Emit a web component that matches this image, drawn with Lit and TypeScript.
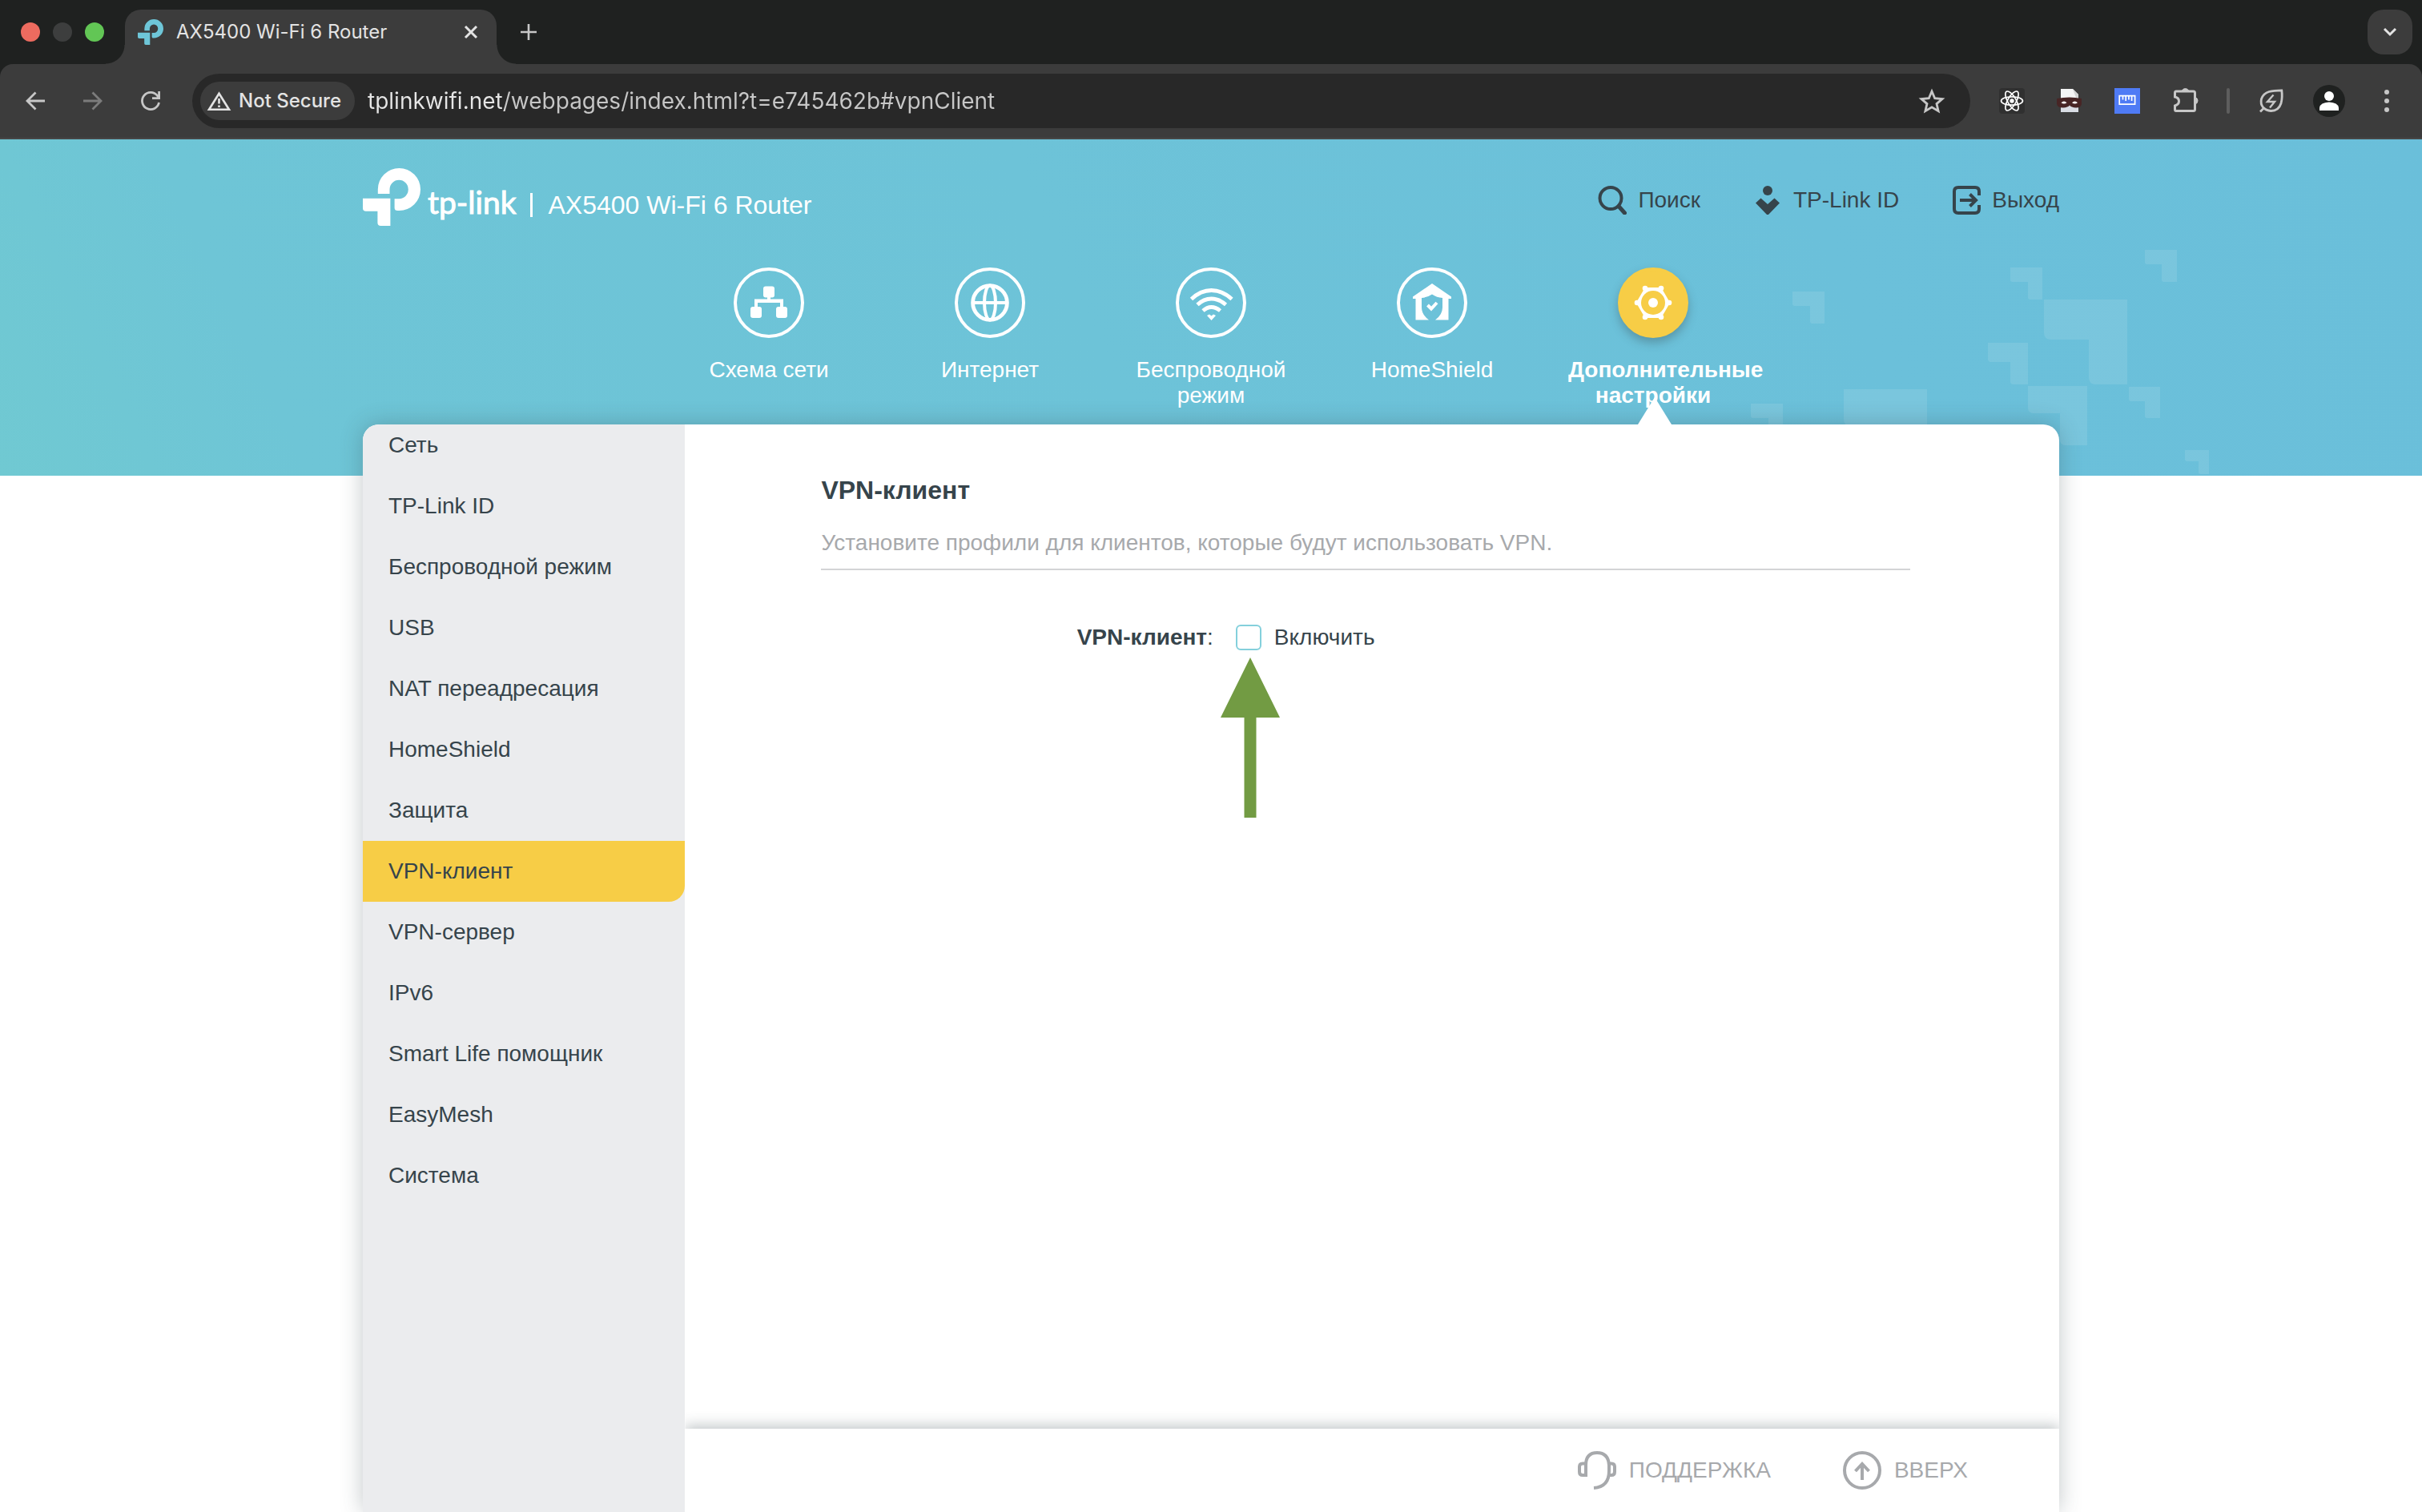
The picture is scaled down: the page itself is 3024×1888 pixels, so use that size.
import { LitElement, html, css, svg } from "lit";
import { customElement, state } from "lit/decorators.js";
import { classMap } from "lit/directives/class-map.js";

const tpMark = svg`
  <path d="M18.8 32V26.5A26.6 26.5 0 0 1 72 26.5A26.6 26.5 0 0 1 45.4 53H43.5Q39.6 53 39.6 49.5V38.3H45.4A11.6 11.7 0 0 0 56.8 26.5A11.6 11.7 0 0 0 33.5 26.5V32Z" />
  <path d="M0 37.8H34.4V72H22.5Q18.4 72 18.4 68V53.8H4Q0 53.8 0 50Z" />
`;

@customElement("browser-bar")
export class BrowserBar extends LitElement {
  static styles = css`
    :host {
      display: block;
      font-family: Inter, "Liberation Sans", sans-serif;
      color: #e3e3e3;
    }
    button {
      display: flex;
      align-items: center;
      justify-content: center;
      border: 0;
      padding: 0;
      background: none;
      color: #c7c7c7;
      font: inherit;
      flex: none;
    }
    svg {
      display: block;
      overflow: visible;
    }
    .stroke {
      fill: none;
      stroke: currentColor;
    }
    .strip {
      display: flex;
      align-items: center;
      height: 80px;
      padding: 0 12px 0 26px;
      background: #1f2120;
    }
    .lights {
      display: flex;
      gap: 16px;
      margin-right: 26px;
    }
    .light {
      width: 24px;
      height: 24px;
      border-radius: 50%;
      background: #3d3e3e;
    }
    .light.close {
      background: #ed6b5f;
    }
    .light.zoom {
      background: #62c655;
    }
    .tab {
      position: relative;
      display: flex;
      align-items: center;
      align-self: flex-end;
      width: 464px;
      height: 68px;
      padding: 0 16px 12px;
      box-sizing: border-box;
      border-radius: 20px 20px 0 0;
      background: #3c3c3c;
    }
    .tab::before,
    .tab::after {
      content: "";
      position: absolute;
      bottom: 0;
      width: 24px;
      height: 24px;
    }
    .tab::before {
      right: 100%;
      background: radial-gradient(circle at 0 0, transparent 23px, #3c3c3c 24px);
    }
    .tab::after {
      left: 100%;
      background: radial-gradient(circle at 100% 0, transparent 23px, #3c3c3c 24px);
    }
    .favicon {
      fill: #6ec6d8;
    }
    .title {
      flex: 1;
      margin-left: 16px;
      font-size: 24px;
      line-height: 32px;
      white-space: nowrap;
    }
    .tab button,
    .new-tab {
      width: 32px;
      height: 32px;
    }
    .tab button {
      color: #e3e3e3;
    }
    .new-tab {
      margin-left: 24px;
    }
    .tab-list {
      width: 56px;
      height: 56px;
      margin-left: auto;
      border-radius: 20px;
      background: #3c3c3c;
      color: #e3e3e3;
    }
    .corners {
      background: #1f2120;
    }
    .toolbar {
      display: flex;
      align-items: center;
      height: 92px;
      padding: 0 28px 0 32px;
      gap: 36px;
      background: #3c3c3c;
      border-bottom: 2px solid #474747;
      border-radius: 16px 16px 0 0;
    }
    .history {
      display: flex;
      gap: 48px;
      margin-right: 4px;
    }
    .history .off {
      color: #7c7c7c;
    }
    .address {
      flex: 1;
      display: flex;
      align-items: center;
      height: 68px;
      padding: 0 32px 0 10px;
      box-sizing: border-box;
      border-radius: 34px;
      background: #282828;
    }
    .chip {
      height: 48px;
      gap: 10px;
      padding: 0 17px 0 9px;
      border-radius: 24px;
      background: #3c3c3c;
      color: #e3e3e3;
      font-size: 24px;
      font-weight: 500;
      line-height: 32px;
      white-space: nowrap;
    }
    .url {
      flex: 1;
      min-width: 0;
      margin: 0 16px;
      padding: 0;
      border: 0;
      outline: 0;
      font: inherit;
      font-size: 28px;
      line-height: 36px;
      color: transparent;
      background: linear-gradient(90deg, #e6e6e6 171px, #c7c7c7 171px);
      -webkit-background-clip: text;
      background-clip: text;
    }
    .extensions {
      display: flex;
      gap: 40px;
    }
    .rule {
      width: 4px;
      height: 32px;
      border-radius: 2px;
      background: #5e5e5e;
    }
    .avatar {
      width: 40px;
      height: 40px;
      border-radius: 50%;
      background: #1f2120;
      color: #fff;
    }
  `;

  render() {
    return html`
      <div class="strip">
        <div class="lights">
          <span class="light close"></span><span class="light"></span><span class="light zoom"></span>
        </div>
        <div class="tab">
          <svg class="favicon" width="32" height="32" viewBox="0 0 72 72">${tpMark}</svg>
          <span class="title">AX5400 Wi-Fi 6 Router</span>
          <button aria-label="Close tab">
            <svg class="stroke" width="16" height="16" viewBox="0 0 16 16" stroke-width="3"><path d="M1 1 15 15M15 1 1 15" /></svg>
          </button>
        </div>
        <button class="new-tab" aria-label="New tab">
          <svg class="stroke" width="20" height="20" viewBox="0 0 20 20" stroke-width="2.6"><path d="M10 0V20M0 10H20" /></svg>
        </button>
        <button class="tab-list" aria-label="Search tabs">
          <svg class="stroke" width="16" height="10" viewBox="0 0 16 10" stroke-width="3"><path d="M1 1 8 8 15 1" /></svg>
        </button>
      </div>
      <div class="corners">
        <div class="toolbar">
          <div class="history">
            <button aria-label="Back">
              <svg class="stroke" width="24" height="24" viewBox="0 0 24 24" stroke-width="2.8"><path d="M24 12H2M12.5 1.5 2 12 12.5 22.5" /></svg>
            </button>
            <button class="off" aria-label="Forward">
              <svg class="stroke" width="24" height="24" viewBox="0 0 24 24" stroke-width="2.8"><path d="M0 12H22M11.5 1.5 22 12 11.5 22.5" /></svg>
            </button>
            <button aria-label="Reload">
              <svg class="stroke" width="24" height="24" viewBox="0 0 24 24" stroke-width="2.8"><path d="M22.5 14A10.6 10.6 0 1 1 20.5 5.500L22.5 8.5M22.6 0V8.6H14" /></svg>
            </button>
          </div>
          <div class="address">
            <button class="chip">
              <svg class="stroke" width="29" height="24" viewBox="0 0 29 24" stroke-width="2.6"><path d="M14.5 2.8 27 22.7H2ZM14.5 9V15.5M14.5 17.5V20" /></svg>
              Not Secure
            </button>
            <input class="url" type="text" aria-label="Address" spellcheck="false" value="tplinkwifi.net/webpages/index.html?t=e745462b#vpnClient" />
            <button aria-label="Bookmark">
              <svg class="stroke" width="32" height="30" viewBox="0 0 32 30" stroke-width="2.8"><path d="M16 3 19.7 11.7 29 12.5 22 18.6 24.1 27.7 16 22.9 7.9 27.7 10 18.6 3 12.5 12.3 11.7Z" /></svg>
            </button>
          </div>
          <div class="extensions">
            <button aria-label="React Developer Tools">
              <svg width="32" height="32" viewBox="0 0 32 32">
                <rect width="32" height="32" rx="4" fill="#303030" />
                <g fill="none" stroke="#fff" stroke-width="1.7">
                  <ellipse cx="16" cy="16" rx="13.5" ry="5.2" />
                  <ellipse cx="16" cy="16" rx="13.5" ry="5.2" transform="rotate(60 16 16)" />
                  <ellipse cx="16" cy="16" rx="13.5" ry="5.2" transform="rotate(120 16 16)" />
                </g>
                <circle cx="16" cy="16" r="2.7" fill="#fff" />
              </svg>
            </button>
            <button aria-label="Mask">
              <svg width="32" height="32" viewBox="0 0 32 32">
                <path d="M5 1H20L27 8V30H5Z" fill="#f4f5f5" />
                <path d="M20 1 27 8V12H24Z" fill="#d2d4d4" />
                <path d="M5 22H27V30H5Z" fill="#d9dde4" />
                <path d="M0 13Q16 10 31 13V20Q30 24.5 24 24.5 18 24 16 21.5 14 24 8 24.5 1 24.5 0 20Z" fill="#472525" />
                <path d="M5.500 18.200Q9 15 12.500 18.200 9 20.800 5.500 18.200ZM19 18.200Q22.500 15 26 18.200 22.500 20.800 19 18.200Z" fill="#fff" />
              </svg>
            </button>
            <button aria-label="Page Ruler">
              <svg width="32" height="32" viewBox="0 0 32 32">
                <rect width="32" height="32" fill="#4f7bf5" />
                <path d="M6.200 9.7H25.6V20.2H6.2ZM10.5 10V14.5M14.2 10V16M17.9 10V14.5M21.6 10V16" fill="none" stroke="#fff" stroke-width="1.7" />
              </svg>
            </button>
            <button aria-label="Extensions">
              <svg class="stroke" width="32" height="32" viewBox="0 0 32 32" stroke-width="3">
                <path d="M5 4H26.5Q28.5 4 28.5 6V26.5Q28.5 28.5 26.5 28.5H5Q3.5 28.5 3.5 26.5V22Q8.5 20.5 8.5 16.5 8.5 12 3.5 11V6Q3.5 4 5 4Z" />
                <path d="M12.5 3A4.5 4.5 0 0 1 20.5 3ZM29 11.5A4.5 4.5 0 0 1 29 20Z" fill="currentColor" stroke-width="1" />
              </svg>
            </button>
          </div>
          <span class="rule"></span>
          <button aria-label="Energy saver">
            <svg class="stroke" width="32" height="32" viewBox="0 0 32 32" stroke-width="2.8">
              <path d="M28.8 2.8Q30 12 28 19 25 28.5 15.5 28.5 9 28 5.5 24 2 19.5 3.5 13.5 6 6.5 13 4.5 19 2.8 28.8 2.8ZM2 29.5 7 24.5" />
              <path d="M18.5 8.5 11 17H20L14 24.5" stroke-width="2.4" />
            </svg>
          </button>
          <button class="avatar" aria-label="Profile">
            <svg width="24" height="24" viewBox="0 0 24 24" fill="currentColor"><circle cx="12" cy="6" r="6" /><path d="M0 24V20.5Q1 14 12 13.5 23 14 24 20.5V24Z" /></svg>
          </button>
          <button aria-label="Menu">
            <svg width="32" height="32" viewBox="0 0 32 32" fill="currentColor"><circle cx="16" cy="5" r="3" /><circle cx="16" cy="16" r="3" /><circle cx="16" cy="27" r="3" /></svg>
          </button>
        </div>
      </div>
    `;
  }
}

const navItems = [
  {
    label: "Схема сети",
    icon: svg`<g fill="currentColor"><rect x="37" y="23.5" width="14" height="14" rx="3" /><rect x="21" y="49" width="14" height="14" rx="3" /><rect x="53" y="49" width="14" height="14" rx="3" /><path d="M42 37H46V39.5H62V49H58V44H30V49H26V39.5H42Z" /></g>`,
  },
  {
    label: "Интернет",
    icon: svg`<g fill="none" stroke="currentColor" stroke-width="4.8"><circle cx="44" cy="44" r="21.4" /><ellipse cx="44" cy="44" rx="7" ry="21.5" stroke-width="4" /><path d="M22 44H66" stroke-width="4.2" /></g>`,
  },
  {
    label: "Беспроводной режим",
    icon: svg`<g fill="none" stroke="currentColor" stroke-width="4.8"><path d="M19.5 39.5Q31 28.5 44.5 28.5T70 39.5M27 46.5Q35 39 44.5 39T62.5 46.5M34 54Q39 49.5 44.5 49.5T55.5 54" /></g><path d="M39 60 42 58.5 44.5 60.5 47 58.5 50 60 44.5 66Z" fill="currentColor" />`,
  },
  {
    label: "HomeShield",
    icon: svg`<path d="M44 20 68 36.5V39H64.5V65.5H48Q57 59 57 50V38Q50 37.5 44 33.5 38 37.5 31 38V50Q31 59 40 65.5H23.5V39H20V36.5Z" fill="currentColor" /><path d="M38.5 47 43 51.5 50 44" fill="none" stroke="currentColor" stroke-width="4" />`,
  },
  {
    label: "Дополнительные настройки",
    icon: svg`<path d="M34.5 26H53.5L64 44 53.5 62H34.5L24 44Z" fill="currentColor" stroke="currentColor" stroke-width="2" stroke-linejoin="round" /><g fill="currentColor"><circle cx="34" cy="26" r="3.3" /><circle cx="54" cy="26" r="3.3" /><circle cx="34" cy="62" r="3.3" /><circle cx="54" cy="62" r="3.3" /><circle cx="24" cy="44" r="3.300" /><circle cx="64" cy="44" r="3.3" /></g><circle cx="44" cy="44" r="15" class="hole" /><circle cx="44" cy="44" r="6" fill="currentColor" />`,
  },
];

const menuItems = [
  "Сеть",
  "TP-Link ID",
  "Беспроводной режим",
  "USB",
  "NAT переадресация",
  "HomeShield",
  "Защита",
  "VPN-клиент",
  "VPN-сервер",
  "IPv6",
  "Smart Life помощник",
  "EasyMesh",
  "Система",
];

/** Corner shapes of the header decoration: left, top, right, bottom, notch x, notch y, radius. */
const corners = [
  [58, 64, 98, 104, 80, 82, 3],
  [330, 34, 370, 74, 352, 52, 3],
  [498, 12, 538, 52, 519, 30, 3],
  [372, 74, 476, 180, 428, 124, 9],
  [302, 128, 352, 180, 330, 152, 4],
  [352, 182, 426, 256, 392, 216, 7],
  [478, 183, 517, 222, 498, 201, 3],
  [548, 262, 578, 292, 565, 276, 3],
  [122, 186, 226, 292, 178, 232, 9],
  [6, 204, 46, 244, 28, 222, 3],
];

const cornerPath = ([l, t, r, b, nx, ny, c]: number[]) =>
  `M${l} ${t}H${r}V${b}H${nx + c}Q${nx} ${b} ${nx} ${b - c}V${ny}H${l + c}Q${l} ${ny} ${l} ${ny - c}Z`;

@customElement("router-page")
export class RouterPage extends LitElement {
  static styles = css`
    :host {
      position: relative;
      display: flex;
      flex-direction: column;
      align-items: center;
      font-family: "Liberation Sans", Arial, sans-serif;
      font-size: 28px;
      line-height: 32px;
      color: #36444b;
      background: linear-gradient(65deg, #70c9d2 0%, #6ec5d6 12%, #6dc3d8 45%, #6bc0da 75%, #6abfda 100%) 0 0 / 100% 420px no-repeat #fff;
    }
    a {
      color: inherit;
      text-decoration: none;
    }
    svg {
      display: block;
      flex: none;
    }
    .pattern {
      position: absolute;
      top: 126px;
      right: 0;
      fill: #fff;
      opacity: 0.1;
    }
    .top {
      position: relative;
      display: flex;
      align-items: center;
      justify-content: space-between;
      width: 100%;
      max-width: 2118px;
      padding-top: 36px;
    }
    .brand {
      display: flex;
      align-items: center;
      color: #fff;
    }
    .mark {
      fill: currentColor;
    }
    .wordmark {
      margin-left: 9px;
      padding-top: 12px;
      font-family: Lato, sans-serif;
      font-size: 39px;
      line-height: 40px;
      -webkit-text-stroke: 1px currentColor;
    }
    .model {
      display: flex;
      align-items: center;
      gap: 19px;
      margin-left: 18px;
      padding-top: 20px;
      font-size: 32px;
      line-height: 36px;
    }
    .model::before {
      content: "";
      width: 3px;
      height: 30px;
      background: currentColor;
    }
    .links {
      display: flex;
      gap: 66px;
      padding-top: 8px;
    }
    .link {
      display: flex;
      align-items: center;
      gap: 14px;
    }
    .nav {
      position: relative;
      z-index: 1;
      display: flex;
      justify-content: center;
      gap: 64px;
      margin-top: 52px;
      color: #fff;
    }
    .nav-item {
      position: relative;
      display: flex;
      flex-direction: column;
      gap: 24px;
      width: 212px;
      padding-bottom: 20px;
      text-align: center;
    }
    .nav-item.active {
      font-weight: bold;
    }
    .nav-item.active::after {
      content: "";
      position: absolute;
      bottom: 0;
      left: 50%;
      width: 42px;
      height: 34px;
      margin-left: -19px;
      background: #fff;
      clip-path: polygon(50% 0, 100% 100%, 0 100%);
    }
    .badge {
      align-self: center;
      width: 80px;
      height: 80px;
      border: 4px solid #fff;
      border-radius: 50%;
    }
    .badge svg {
      margin: -4px;
    }
    .active .badge {
      border-color: #f7cd46;
      background: #f7cd46;
      box-shadow: 0 6px 12px rgba(54, 68, 75, 0.35);
    }
    .hole {
      fill: #f7cd46;
    }
    .card {
      position: relative;
      flex: 1;
      display: flex;
      width: 100%;
      max-width: 2118px;
      border-radius: 20px 20px 0 0;
      background: #fff;
      box-shadow: 0 0 28px rgba(54, 68, 75, 0.3);
    }
    .side {
      width: 19%;
      overflow: hidden;
      border-radius: 20px 0 0 0;
      background: #ebecee;
    }
    .menu {
      margin: -12px 0 0;
      padding: 0;
      list-style: none;
    }
    .menu a {
      display: block;
      padding: 0 32px;
      line-height: 76px;
      white-space: nowrap;
    }
    .menu .current {
      border-bottom-right-radius: 20px;
      background: #f7cd46;
    }
    .body {
      flex: 1;
      display: flex;
      flex-direction: column;
    }
    .content {
      flex: 1;
      padding: 64px 186px 64px 170px;
    }
    h1 {
      margin: 0;
      font-size: 32px;
      line-height: 36px;
    }
    .about {
      margin: 32px 0 0;
      padding-bottom: 16px;
      border-bottom: 2px solid #d3d4d6;
      color: #a7a9ac;
    }
    .field {
      display: grid;
      grid-template-columns: 36% 1fr;
      column-gap: 28px;
      align-items: center;
      margin-top: 68px;
    }
    .name {
      text-align: right;
    }
    .option {
      position: relative;
      display: flex;
      align-items: center;
      gap: 16px;
      justify-self: start;
    }
    .check {
      appearance: none;
      width: 32px;
      height: 32px;
      margin: 0;
      border: 2px solid #84d0dc;
      border-radius: 6px;
      background: #fff;
    }
    .check:checked {
      background: #84d0dc;
    }
    .arrow {
      position: absolute;
      top: 41px;
      left: -19px;
      fill: #729b43;
    }
    .foot {
      display: flex;
      justify-content: flex-end;
      align-items: center;
      gap: 90px;
      height: 104px;
      padding-right: 114px;
      color: #a7a9ac;
      box-shadow: 0 -4px 16px rgba(54, 68, 75, 0.3);
      clip-path: inset(-32px 0 0 0);
    }
    .foot .link {
      gap: 16px;
    }
    .up {
      padding: 0;
      border: 0;
      background: none;
      color: inherit;
      font: inherit;
    }
  `;

  @state() private enabled = false;

  private toggle(e: Event) {
    this.enabled = (e.target as HTMLInputElement).checked;
  }

  render() {
    return html`
      <svg class="pattern" width="844" height="294" viewBox="0 0 844 294" aria-hidden="true">
        ${corners.map((c) => svg`<path d=${cornerPath(c)} />`)}
      </svg>
      <header class="top">
        <div class="brand">
          <svg class="mark" width="72" height="72" viewBox="0 0 72 72">${tpMark}</svg>
          <span class="wordmark">tp-link</span>
          <span class="model">AX5400 Wi-Fi 6 Router</span>
        </div>
        <div class="links">
          <a class="link" href="#search">
            <svg width="36" height="36" viewBox="0 0 36 36" fill="none" stroke="currentColor" stroke-width="4"><circle cx="16" cy="15.5" r="13.5" /><path d="M26 25.5 33.5 34" stroke-width="5" stroke-linecap="round" /></svg>
            Поиск
          </a>
          <a class="link" href="#cloud">
            <svg width="36" height="36" viewBox="0 0 36 36" fill="currentColor"><circle cx="18" cy="6" r="6" /><path d="M3 21.5 9.5 15.5 18 23 26.5 15.5 33 21.5 18 37Z" /></svg>
            TP-Link ID
          </a>
          <a class="link" href="#logout">
            <svg width="36" height="36" viewBox="0 0 36 36" fill="none" stroke="currentColor" stroke-width="4"><path d="M34 12V7Q34 2 29 2H8Q3 2 3 7V29Q3 34 8 34H29Q34 34 34 29V24" /><path d="M10 18H29M22.5 10.5 30 18 22.5 25.5" /></svg>
            Выход
          </a>
        </div>
      </header>
      <nav class="nav">
        ${navItems.map(
          (item, i) => html`
            <a class=${classMap({ "nav-item": true, active: i === 4 })} href="#nav-${i}">
              <span class="badge"><svg width="88" height="88" viewBox="0 0 88 88">${item.icon}</svg></span>
              <span>${item.label}</span>
            </a>
          `
        )}
      </nav>
      <div class="card">
        <aside class="side">
          <ul class="menu">
            ${menuItems.map(
              (label) => html`<li><a class=${classMap({ current: label === "VPN-клиент" })} href="#menu">${label}</a></li>`
            )}
          </ul>
        </aside>
        <div class="body">
          <main class="content">
            <h1>VPN-клиент</h1>
            <p class="about">Установите профили для клиентов, которые будут использовать VPN.</p>
            <div class="field">
              <span class="name"><b>VPN-клиент</b>:</span>
              <div class="option">
                <input class="check" id="enable" type="checkbox" .checked=${this.enabled} @change=${this.toggle} />
                <label for="enable">Включить</label>
                <svg class="arrow" width="74" height="200" viewBox="0 0 74 200" aria-hidden="true"><path d="M37 0 74 75H44.5V200H29.5V75H0Z" /></svg>
              </div>
            </div>
          </main>
          <footer class="foot">
            <a class="link" href="#support">
              <svg width="48" height="48" viewBox="0 0 48 48" fill="none" stroke="currentColor" stroke-width="4"><path d="M10 31V17.5Q10 2 24 2T39 17.5V25Q39 44.5 20 46" /><path d="M10 15.5H6Q2 15.5 2 19.5V26Q2 30 6 30H10ZM39 15.5H42Q46 15.5 46 19.5V26Q46 30 42 30H38.5" /></svg>
              ПОДДЕРЖКА
            </a>
            <button class="link up">
              <svg width="48" height="48" viewBox="0 0 48 48" fill="none" stroke="currentColor" stroke-width="4"><circle cx="24" cy="24" r="22" /><path d="M24 36V16M15.5 25 24 16 32.500 25" /></svg>
              ВВЕРХ
            </button>
          </footer>
        </div>
      </div>
    `;
  }
}

@customElement("app-root")
export class AppRoot extends LitElement {
  static styles = css`
    :host {
      display: flex;
      flex-direction: column;
      min-height: 100vh;
    }
    .page {
      flex: 1;
    }
  `;

  render() {
    return html`<browser-bar></browser-bar><router-page class="page"></router-page>`;
  }
}
